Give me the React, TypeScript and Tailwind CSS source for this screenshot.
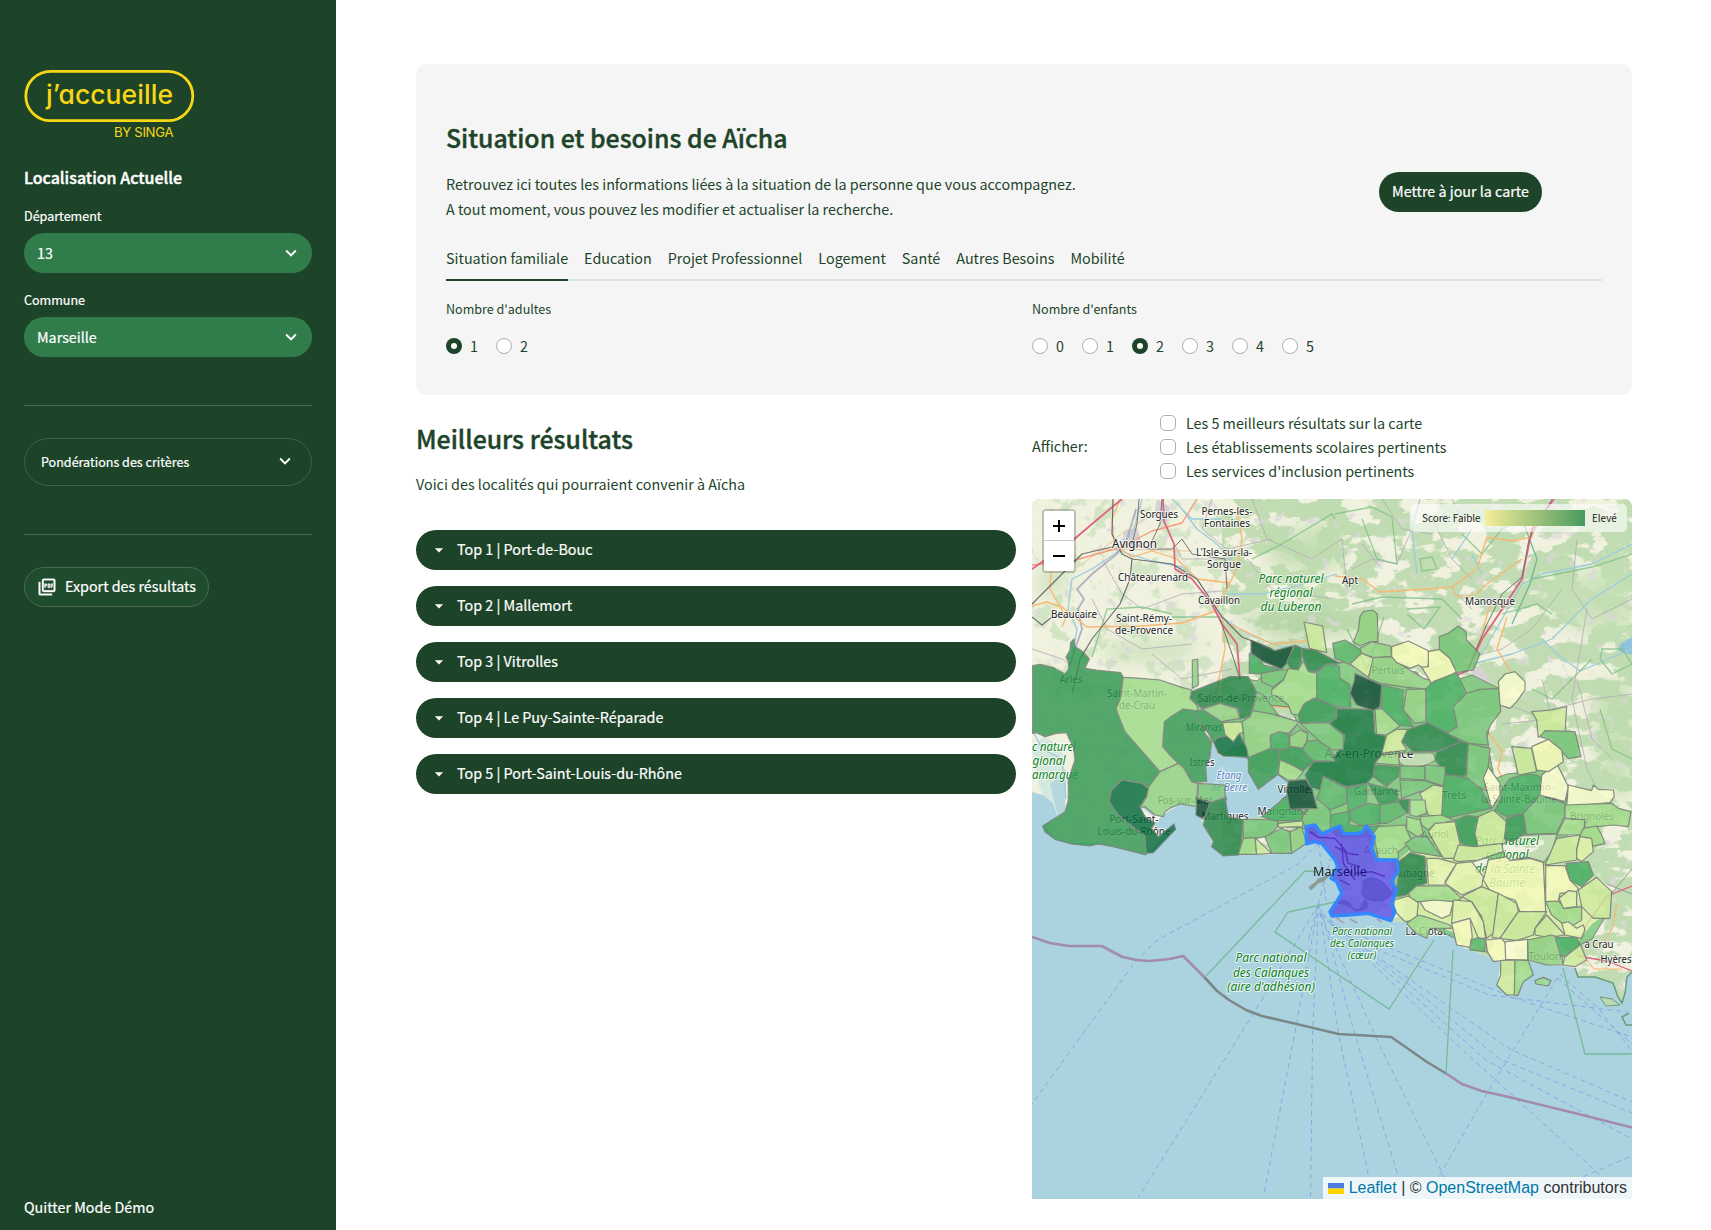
import { MdExpandMore, MdOutlinePictureAsPdf, MdArrowDropDown } from "react-icons/md";

/* ---------- Map data ---------- */

const TILE: Record<string, string> = {
  C: "translate(-2 201) scale(0.33333)",
  D: "translate(303 201) scale(0.33333)",
  E: "translate(148 91) scale(0.33333)",
  F: "translate(303 361) scale(0.33333)",
};

const SCALE: Record<string, string> = {
  b: "#fbfdcc",
  c: "#f4fab5",
  d: "#e3f4a9",
  e: "#cbec98",
  f: "#9edb86",
  g: "#8cd07e",
  h: "#70c273",
  i: "#54b566",
  j: "#3daa5b",
  k: "#2c954e",
  l: "#1f8041",
  m: "#0d723a",
  n: "#006837",
  o: "#004529",
};

// [tile, colour class, outline]
const COMMUNES: [string, string, string][] = [
  ["C", "k", "8,-103 30,-107 68,-98 105,-78 117,-93 115,-115 108,-128 120,-150 122,-173 132,-183 135,-160 155,-148 178,-123 165,-95 198,-90 272,-82 280,-68 275,-35 270,-5 268,20 258,30 265,45 285,95 390,215 355,262 335,250 275,240 245,270 237,305 265,345 320,390 345,408 348,465 310,455 250,440 205,432 180,438 125,432 75,418 45,395 38,378 80,352 105,335 115,300 115,240 135,180 130,140 118,118 110,98 80,100 45,110 20,98 8,100"],
  ["C", "f", "280,-68 330,-65 390,-60 455,-38 485,-30 480,-5 500,15 505,33 460,27 430,50 405,70 400,100 398,140 420,165 445,190 390,215 285,95 265,45 258,25 270,0"],
  ["C", "g", "487,-120 503,-123 505,-45 487,-35"],
  ["C", "k", "400,140 403,65 430,45 460,27 505,33 520,70 525,100 545,125 540,170 527,200 530,245 485,248 460,205 445,190 420,165"],
  ["C", "g", "355,262 390,215 445,190 462,205 485,246 503,250 500,320 450,312 425,322 405,335 400,350 375,345 345,320 330,322 350,290"],
  ["C", "n", "245,270 275,240 335,250 355,265 350,290 330,320 345,350 375,370 365,385 385,410 432,372 437,388 370,458 348,460 345,408 320,390 265,345 237,305"],
  ["C", "h", "505,250 585,255 585,285 590,300 545,308 503,295"],
  ["C", "o", "500,295 540,308 530,345 515,355 498,345"],
  ["C", "l", "540,308 585,293 595,350 640,360 635,420 625,465 580,468 545,440 550,425 520,375 525,350"],
  ["C", "h", "640,357 745,360 740,385 710,410 675,415 640,415"],
  ["C", "f", "640,415 675,413 680,463 625,463"],
  ["C", "e", "675,413 725,460 680,463"],
  ["C", "h", "705,410 755,385 780,395 785,460 725,460"],
  ["C", "g", "785,460 780,395 815,380 830,430"],
  ["C", "e", "745,370 820,362 818,380 745,382"],
  ["C", "k", "655,175 690,145 745,150 750,175 745,222 685,268 655,215"],
  ["C", "f", "750,178 775,185 820,215 800,240 772,240 745,222"],
  ["C", "j", "695,350 775,285 785,325 820,335 815,362 735,362"],
  ["C", "g", "640,95 635,65 660,50 668,30 720,40 805,65 800,75 775,100 745,97 720,110 722,145 650,175 645,140"],
  ["C", "l", "480,-5 485,-25 510,-35 560,-55 600,-70 655,-70 680,-25 660,50 630,57 625,25 570,13 515,25"],
  ["C", "g", "515,28 570,10 620,25 630,55 575,65 520,30"],
  ["C", "h", "680,-25 700,-15 722,15 745,45 668,32"],
  ["C", "k", "490,33 520,30 575,65 585,85 590,108 565,115 550,128 535,100 520,80 505,60"],
  ["C", "e", "578,68 635,65 640,95 625,105 615,140 585,105"],
  ["C", "n", "550,125 565,112 590,108 610,125 628,100 650,145 655,172 580,168 565,160"],
  ["C", "j", "722,105 750,95 778,105 778,148 722,148"],
  ["C", "h", "775,110 800,75 832,98 832,130 778,130"],
  ["C", "k", "750,150 835,130 850,185 820,212 775,190 748,178"],
  ["E", "j", "208,190 235,200 250,225 300,238 240,252 208,250"],
  ["E", "m", "470,355 580,358 585,430 618,440 610,490 585,520 580,560 560,580 500,590 430,560 420,600 390,590 375,555 400,515 450,515 490,465 495,435 445,400 470,385"],
  ["E", "e", "372,96 428,108 440,188 388,175"],
  ["E", "o", "213,150 285,182 340,167 325,215 305,237 250,215 213,190"],
  ["E", "l", "345,165 365,175 365,215 352,245 335,240 320,215"],
  ["E", "l", "365,175 405,180 480,220 440,222 410,245 378,245 370,215"],
  ["E", "i", "458,160 495,150 540,178 545,192 530,232 465,205"],
  ["E", "g", "540,175 575,155 632,168 635,200 580,203 545,190"],
  ["E", "e", "510,222 545,190 582,205 565,262"],
  ["E", "g", "540,80 550,65 578,60 592,72 594,155 570,155 540,168 520,155 535,120"],
  ["E", "g", "580,203 640,200 665,225 730,265 755,272 745,297 680,292 600,280 565,265 572,235"],
  ["E", "c", "635,170 685,153 745,182 748,215 740,240 715,225 690,235 650,218 635,200"],
  ["E", "c", "745,185 778,178 810,205 830,245 758,285 725,232 745,230"],
  ["E", "h", "778,140 805,130 835,108 858,125 860,150 900,192 880,240 830,248 810,205 778,178"],
  ["E", "h", "243,250 300,240 325,240 310,268 280,292 245,275"],
  ["E", "f", "275,300 310,270 325,235 355,240 370,213 385,245 410,250 413,320 370,345 355,375 335,372 325,345 290,318 275,315"],
  ["E", "j", "410,250 440,222 478,228 480,265 510,285 512,350 470,352 410,325"],
  ["E", "o", "525,250 605,285 600,350 580,362 530,345 510,310 522,275"],
  ["E", "k", "355,375 375,340 400,325 470,350 470,385 445,400 360,398"],
  ["E", "j", "605,285 670,300 668,350 700,410 655,405 605,365"],
  ["E", "g", "680,298 738,297 738,395 705,400 670,360"],
  ["E", "j", "738,297 760,275 830,248 860,310 825,345 830,410 800,428 738,395"],
  ["E", "h", "860,310 900,298 957,295 962,365 935,400 920,430 925,465 865,460 800,430 832,410 820,350"],
  ["E", "h", "445,398 490,435 490,478 455,480 420,455 360,400"],
  ["E", "g", "360,420 383,430 380,455 368,475 330,468 328,440"],
  ["E", "i", "380,455 410,450 450,475 465,515 400,512 368,480"],
  ["E", "f", "585,360 605,355 660,408 620,435 590,432"],
  ["E", "e", "620,435 650,418 683,418 665,455 680,480 605,490"],
  ["E", "l", "665,455 685,418 745,398 845,455 770,485 700,485"],
  ["E", "l", "845,455 865,460 858,560 800,555 765,510 770,485"],
  ["E", "f", "585,520 605,495 655,490 658,525"],
  ["E", "h", "660,527 735,530 735,570 660,565"],
  ["E", "h", "735,525 795,530 795,590 735,570"],
  ["E", "k", "585,525 660,530 655,560 620,590 580,560"],
  ["E", "h", "865,460 930,475 925,530 915,600 840,562 860,555"],
  ["E", "j", "795,555 860,562 905,600 930,650 935,655 780,688 790,590"],
  ["E", "h", "735,572 790,590 720,605 665,625 660,570"],
  ["E", "e", "720,610 760,585 790,590 785,680 745,675"],
  ["E", "k", "565,580 650,600 655,635 600,645"],
  ["E", "l", "655,628 688,628 685,670 660,655"],
  ["E", "i", "430,560 500,595 500,640 450,660 410,625 420,600"],
  ["E", "j", "500,595 560,580 560,640 505,665"],
  ["E", "i", "600,645 655,635 680,670 620,700 598,700"],
  ["E", "j", "505,665 565,640 600,645 600,700 545,708 510,690"],
  ["E", "h", "370,675 410,625 450,660 455,700 450,720 390,730 365,690"],
  ["E", "j", "452,675 505,665 510,705 575,710 600,705 585,740 470,740 450,715"],
  ["D", "f", "130,380 210,375 230,425 190,455 190,480 130,475 115,400"],
  ["D", "f", "215,350 255,360 265,400 250,410 215,390"],
  ["D", "h", "210,430 240,410 275,410 320,470 230,455"],
  ["D", "f", "255,350 320,345 360,362 300,372 280,390 260,375"],
  ["D", "e", "280,395 300,370 360,365 375,430 360,475 325,475 305,440"],
  ["D", "f", "225,300 270,300 275,340 245,350 225,345"],
  ["D", "l", "190,485 225,458 270,470 275,550 245,558 215,585 180,590 190,530"],
  ["D", "d", "275,475 310,475 365,490 330,545 345,555 280,555"],
  ["D", "d", "365,490 410,485 445,530 440,560 380,585 330,550"],
  ["D", "k", "360,360 395,347 430,350 425,440 400,440 375,425"],
  ["D", "e", "430,350 475,330 520,370 510,430 430,445 420,400"],
  ["D", "e", "355,480 370,435 420,440 500,430 505,455 430,480 370,485"],
  ["D", "j", "480,330 500,295 497,275 525,235 575,222 605,225 620,235 620,280 565,340 515,350"],
  ["D", "b", "445,235 460,200 495,250 495,285 470,325 455,270"],
  ["D", "k", "515,355 565,340 572,400 530,425 508,415"],
  ["D", "h", "565,340 615,285 690,310 690,345 665,400 575,403"],
  ["D", "b", "620,225 665,190 700,260 690,305 615,285"],
  ["D", "e", "530,140 590,145 605,215 550,225 540,180"],
  ["D", "e", "590,35 650,30 695,20 690,100 630,95 610,112 605,60"],
  ["D", "h", "615,110 630,92 720,95 738,170 700,175 680,155 640,118"],
  ["D", "c", "590,140 640,118 680,150 685,185 640,215 605,210"],
  ["D", "b", "700,255 770,272 775,255 790,268 835,270 838,290 825,308 695,320"],
  ["D", "f", "690,315 830,310 850,325 888,335 880,380 835,375 785,380 750,385 748,360 690,355"],
  ["D", "f", "690,355 750,360 745,405 665,405"],
  ["D", "f", "745,385 785,378 800,405 810,430 770,440 735,408"],
  ["D", "e", "665,415 735,405 725,450 725,480 630,495 650,450"],
  ["D", "d", "725,450 735,410 770,415 775,455 740,485 725,475"],
  ["D", "c", "632,497 690,497 705,540 730,565 725,575 675,580 670,605 632,605"],
  ["D", "j", "693,490 760,485 775,525 740,560 705,540"],
  ["D", "c", "460,480 515,470 525,482 585,475 625,487 632,635 555,635 540,600 470,580 445,540 450,520"],
  ["D", "e", "730,570 785,532 830,575 825,655 775,655 740,620"],
  ["D", "f", "632,605 670,603 690,625 740,620 740,660 700,685 650,645"],
  ["D", "d", "672,595 700,572 725,575 725,620 685,625"],
  ["D", "f", "220,580 245,557 340,558 380,595 360,605 230,605"],
  ["D", "b", "255,605 300,600 355,605 345,645 320,655 270,630"],
  ["D", "d", "178,600 220,588 250,608 245,660 210,665 175,630"],
  ["D", "b", "495,15 490,-55 510,-78 540,-85 570,-55 570,-30 545,5 525,25"],
  ["F", "f", "215,190 250,165 270,170 345,195 350,205 285,205 275,235 240,218"],
  ["F", "e", "380,110 440,80 490,100 475,220 455,235 440,170 410,125"],
  ["F", "d", "355,120 410,125 445,185 452,235 430,235 405,175 350,190"],
  ["F", "e", "490,100 545,130 550,155 495,235 472,232"],
  ["F", "e", "550,155 635,155 600,205 595,225 545,242 495,235"],
  ["F", "e", "600,205 635,165 690,225 640,232 600,225"],
  ["F", "c", "350,190 405,175 412,230 405,262 365,255 358,225"],
  ["F", "i", "408,240 430,233 452,240 448,275 405,270"],
  ["F", "c", "452,240 500,235 515,255 512,300 475,305 457,275"],
  ["F", "b", "510,245 578,238 578,300 512,298"],
  ["F", "g", "578,240 650,225 680,235 683,315 635,315 580,300"],
  ["F", "e", "683,315 690,290 735,250 755,300 720,320"],
  ["F", "j", "660,232 725,232 735,255 690,290 678,290"],
  ["F", "d", "680,190 700,185 725,205 745,195 750,210 740,235 690,225"],
  ["F", "e", "497,302 540,300 540,405 515,405 485,375 497,345"],
  ["F", "f", "540,300 580,302 595,345 565,365 548,408 538,405"],
  ["F", "f", "600,362 625,352 648,362 640,378 603,372"],
  ["E", "o", "325,573 378,568 395,595 412,655 330,658 320,605"],
];

const LAND =
  "0,0 600,0 600,473 595,478 593,494 590,504 586,498 581,484 563,478 546,478 543,469 531,467 515,466 496,462 500,474 491,483 486,497 475,496 465,486 469,463 456,458 438,451 425,446 420,429 395,439 383,434 373,423 359,422 336,414 300,414 308,394 303,361 290,343 275,344 260,354 231,356 191,356 181,346 171,324 164,308 148,305 131,316 123,324 126,337 142,328 114,355 66,344 40,344 23,339 13,327 26,318 21,304 11,296 0,293";

// Solid backing under the communes, with holes for the uncovered pockets
const BACKING =
  "M165 228 160 200 205 178 225 182 250 160 290 170 320 160 350 175 395 190 440 176 468 190 460 215 455 240 462 280 475 275 520 270 535 300 535 340 515 365 510 375 512 410 560 400 575 415 560 440 540 450 470 460 425 440 380 420 360 400 365 362 340 355 335 330 275 330 240 325 250 300 265 290 245 275 220 260 215 250 200 240ZM366 254 401 254 404 261 394 266 375 269 367 263ZM472 337 525 335 520 352 512 363 495 358 475 362 470 350ZM438 364 457 358 455 372 448 378ZM372 172 385 173 392 185 378 180ZM236 206 258 208 265 223 246 216Z";

const SOUTH_EAST_BACKING =
  "365,362 385,345 425,350 438,364 448,378 457,362 512,365 560,375 575,400 575,415 560,425 548,440 540,450 500,455 460,445 425,435 375,415 368,400 385,390";

// [d, stroke, width] in map units
const ROADS: [string, string, number][] = [
  ["M44 69 68 52 88 36 112 20M60 51 90 50 160 52", "#e8c7a0", 1],
  ["M0 107 15 103 30 108 55 128 110 127 150 124 183 112 205 70 210 40 205 10", "#f9b771", 1.4],
  ["M30 128 34 118 18 90 20 60 30 40", "#f9b771", 1.3],
  ["M88 0 80 20 82 45 100 58 120 52 145 60 165 80 198 84", "#f9b771", 1.3],
  ["M190 115 193 150 183 200", "#f9b771", 1.3],
  ["M198 125 240 145 275 142", "#f9b771", 1.3],
  ["M303 77 330 80 348 93 395 90 420 88 445 70 455 38 480 42 500 38 503 20", "#f9b771", 1.4],
  ["M420 88 425 98 445 95 455 85 490 60", "#f9b771", 1.2],
  ["M458 105 450 135 440 160M475 118 465 150 480 175", "#f9b771", 1.3],
  ["M455 232 470 252 466 270 475 290", "#f9b771", 1.4],
  ["M0 66 40 62 90 48 120 32 150 24 165 0", "#f29c7b", 1.4],
  ["M236 207 260 209", "#f9b771", 1.3],
  ["M0 70 40 42 60 25 90 0", "#e0607f", 1.7],
  ["M131 0 132 22 142 45 143 70 160 80 180 105 190 125 205 145 208 180", "#e0607f", 1.7],
  ["M522 0 500 30 490 80 465 118 450 140 435 172 425 176", "#e0607f", 1.8],
  ["M600 387 575 397 555 425 548 440", "#e0607f", 1.3],
  ["M545 457 575 462 600 472", "#e0607f", 1.3],
  ["M550 455 562 470 590 470M585 405 580 430 570 445", "#f9b771", 1.2],
  ["M520 0 497 40 490 78 470 95 455 125 440 160", "#777", 1],
  ["M81 0 80 35 90 55 100 60 98 80 88 105 60 140 48 160 40 195", "#6e6e6e", 1.2],
  ["M80 48 50 55 30 75 10 95 0 105", "#6e6e6e", 1.2],
  ["M0 118 10 126 20 118 60 118", "#6e6e6e", 1.1],
  ["M100 60 140 65 165 80 190 118 210 138 240 150", "#6e6e6e", 1.2],
  ["M107 0 105 25 100 45 118 50 140 50 150 40 160 55 193 60 195 90", "#777", 1],
  ["M188 120 200 155 208 180", "#6e6e6e", 1],
  ["M130 0 128 25 120 42", "#777", 1],
  ["M575 400 600 370M575 385 600 395", "#999", 1],
];

const MINOR_ROADS =
  "M70 60 90 95 110 110 150 95 190 92M60 100 75 130 110 150 160 145M130 20 150 60 200 60M180 0 170 30 195 50 240 40M220 0 235 40 280 60 310 40 315 90M215 60 240 90 300 100M320 70 340 60 365 65 380 30M400 20 420 60 440 80M440 110 425 95M545 40 540 90 560 120 600 100M530 90 500 130 470 150 430 160M430 180 460 200 500 215 560 200 600 195M545 180 560 240 580 260M330 45 350 70M510 180 520 220 470 225M0 150 30 160 60 180M120 155 150 180 200 170M555 110 540 200 555 270 570 300M350 0 370 30 400 35M460 300 480 330M420 0 430 20";

const RIVERS =
  "M110 0 102 30 90 50 60 70 40 80 36 110 45 130 40 160 33 180M82 50 120 62 150 68 165 80 190 118 215 135 250 148 275 148M150 10 165 30 185 45 200 60M140 0 160 20 190 20M195 95 230 95 260 88 305 75M388 0 380 30 385 75M600 45 560 65 510 75 490 85 470 120 450 155M600 75 560 100 520 140 480 155 440 165M510 140 525 155 548 172 600 150M440 55 450 75M0 230 10 250 30 260 34 300M420 60 440 30";

const PARK_LINES =
  "M303 15 340 8 360 18 365 65 345 60 330 20M220 60 250 45 300 15 303 20M520 115 505 105 470 115M500 80 560 68 600 55M320 105 350 98 410 100 430 120M375 110 408 108 392 130 375 115M388 60 400 58 405 70 390 72ZM570 150 590 150 600 165 580 175 568 160ZM60 158 75 110 110 108 140 115M140 118 190 118M430 35 450 55 470 30 490 20M500 190 520 200 560 160M315 130 335 170 352 118M568 210 580 250 600 260";

const FERRIES =
  "M288 344 266 366 126 441 105 461 0 605M288 405 231 501 107 698M288 405 266 524 233 696M288 405 282 535 280 698M288 405 308 534 341 690M290 410 324 534 372 690M290 415 347 541 420 690M290 415 425 544 584 688M292 415 456 561 603 640M292 415 470 560 603 614M300 425 480 550 603 603M300 425 400 465 485 499 603 538M345 450 460 496 598 513M528 479 455 598 402 690M528 479 603 545M530 475 570 510 603 552M600 658 549 680M288 344 296 405M278 440 300 360";

type Label = [string, number, number, number, string?];
// [text, centre x, baseline, width, style]
const LABELS: Label[] = [
  ["Sorgues", 127, 19, 38],
  ["Pernes-les-", 195, 16, 51],
  ["Fontaines", 195, 28, 46],
  ["Avignon", 102.5, 48.5, 45, "city"],
  ["L'Isle-sur-la-", 192, 57, 56],
  ["Sorgue", 192, 69, 34],
  ["Châteaurenard", 121, 82, 70],
  ["Cavaillon", 187, 105, 42],
  ["Beaucaire", 42, 119, 46],
  ["Saint-Rémy-", 112, 123, 56],
  ["de-Provence", 112, 135, 58],
  ["Parc naturel", 259, 84, 65, "park"],
  ["régional", 259, 98, 43, "park"],
  ["du Luberon", 259, 112, 61, "park"],
  ["Apt", 318, 85, 16],
  ["Manosque", 458, 106, 50],
  ["Arles", 39, 184, 23],
  ["Saint-Martin-", 105, 198, 60],
  ["de-Crau", 105, 210, 36],
  ["Salon-de-Provence", 209, 203, 87],
  ["Miramas", 172, 232, 36],
  ["Istres", 170, 267, 25],
  ["Vitrolles", 264, 294, 37],
  ["Marignane", 251, 316, 51],
  ["Martigues", 193, 321, 47],
  ["Fos-sur-Mer", 153, 305, 55],
  ["Port-Saint-", 102, 324, 49],
  ["Louis-du-Rhône", 102, 336, 73],
  ["c naturel", 22, 252, 44, "park"],
  ["gional", 17, 266, 33, "park"],
  ["amargue", 23, 280, 46, "park"],
  ["Pertuis", 356, 175, 33],
  ["Aix-en-Provence", 337, 259, 89, "city"],
  ["Gardanne", 345, 296, 46],
  ["Trets", 422, 300, 24],
  ["Auriol", 403, 339, 27],
  ["Allauch", 349, 355, 34],
  ["Aubagne", 382, 378, 41],
  ["La Ciotat", 394, 436, 41],
  ["Saint-Maximin-", 487, 292, 70],
  ["la-Sainte-Baume", 487, 304, 76],
  ["Brignoles", 560, 321, 44],
  ["Parc naturel", 475, 346, 64, "park"],
  ["régional", 475, 360, 43, "park"],
  ["de la Sainte-", 475, 374, 64, "park"],
  ["Baume", 475, 388, 36, "park"],
  ["Parc national", 330, 436, 60, "parkSmall"],
  ["des Calanques", 330, 448, 64, "parkSmall"],
  ["(cœur)", 330, 460, 29, "parkSmall"],
  ["Parc national", 239, 463, 71, "park"],
  ["des Calanques", 239, 478, 76, "park"],
  ["(aire d'adhésion)", 239, 492, 88, "park"],
  ["Toulon", 513, 461, 33],
  ["a Crau", 567, 449, 29],
  ["Hyères", 584, 464, 31],
  ["Étang", 197, 280, 25, "water"],
  ["de Berre", 197, 292, 37, "water"],
];

function MapLabel({ label }: { label: Label }) {
  const [text, x, y, w, kind] = label;
  const park = kind === "park" || kind === "parkSmall";
  const size = kind === "city" ? 12.5 : kind === "park" ? 12 : kind === "parkSmall" ? 10 : kind === "water" ? 10 : 11;
  return (
    <text
      x={x}
      y={y}
      textAnchor="middle"
      textLength={w}
      lengthAdjust="spacingAndGlyphs"
      fontSize={size}
      fontStyle={park || kind === "water" ? "italic" : "normal"}
      fill={park ? "#0a8020" : kind === "water" ? "#5a83c4" : "#222"}
      stroke="#fff"
      strokeOpacity={0.75}
      strokeWidth={2}
      paintOrder="stroke"
      strokeLinejoin="round"
    >
      {text}
    </text>
  );
}

function ScoreMap() {
  return (
    <svg viewBox="0 0 600 700" className="block h-[700px] w-[600px] font-['Noto_Sans',sans-serif]">
      <defs>
        <clipPath id="land">
          <polygon points={LAND} />
        </clipPath>
        <filter id="woods" x="0" y="0" width="100%" height="100%" colorInterpolationFilters="sRGB">
          <feTurbulence type="fractalNoise" baseFrequency="0.035 0.055" numOctaves="6" seed="5" result="n" />
          <feColorMatrix in="n" type="matrix" values="0 0 0 0 0.755  0 0 0 0 0.863  0 0 0 0 0.7  16 0 0 0 -6.7" />
        </filter>
        <filter id="groves" x="0" y="0" width="100%" height="100%" colorInterpolationFilters="sRGB">
          <feTurbulence type="fractalNoise" baseFrequency="0.05" numOctaves="5" seed="14" result="n" />
          <feColorMatrix in="n" type="matrix" values="0 0 0 0 0.8  0 0 0 0 0.89  0 0 0 0 0.75  14 0 0 0 -7.8" />
        </filter>
        <filter id="towns" x="0" y="0" width="100%" height="100%" colorInterpolationFilters="sRGB">
          <feTurbulence type="fractalNoise" baseFrequency="0.07" numOctaves="3" seed="21" result="n" />
          <feColorMatrix in="n" type="matrix" values="0 0 0 0 0.86  0 0 0 0 0.85  0 0 0 0 0.85  12 0 0 0 -8" />
        </filter>
        <filter id="soft" x="-20%" y="-20%" width="140%" height="140%">
          <feGaussianBlur stdDeviation="9" />
        </filter>
      </defs>
      <rect width="600" height="700" fill="#aad3df" />
      <g clipPath="url(#land)">
        <rect width="600" height="520" fill="#f0f1de" />
        <rect x="190" width="410" height="520" filter="url(#woods)" />
        <rect width="190" height="200" filter="url(#groves)" opacity="0.8" />
        <g filter="url(#soft)" opacity="0.8">
          <path d="M200 115 290 108 345 130 250 142Z" fill="#b4d4a4" />
          <path d="M70 145 170 140 150 160 80 162Z" fill="#c3dfb4" />
          <path d="M10 70 35 65 30 92 5 97Z" fill="#c3dfb4" />
          <path d="M235 40 300 20 310 70 240 70Z" fill="#bddcae" />
          <path d="M500 90 600 60 600 140 540 130Z" fill="#c3dfb4" />
          <path d="M560 190 600 180 600 300 570 290Z" fill="#bddcae" />
        </g>
        <rect width="600" height="520" filter="url(#towns)" opacity="0.7" />
        <path d="M92 32 105 28 110 48 90 50ZM125 0 138 8 134 26 122 18ZM215 186 232 184 230 192ZM452 97 462 100 456 112ZM438 170 450 168 462 190 445 185Z" fill="#d6d2d4" />
        <path d="M0 250 12 236 30 250 34 285 26 318 8 290Z" fill="#d3e9dd" />
        <path d="M18 285 34 270 33 312 26 318Z" fill="#b5d8de" />
        <path d="M600 138 588 145 586 152 600 156Z" fill="#8fc4da" />
        <path d={MINOR_ROADS} fill="none" stroke="#b3abb5" strokeWidth="0.8" strokeLinejoin="round" />
        <path d={RIVERS} fill="none" stroke="#9cccdb" strokeWidth="1.3" strokeLinejoin="round" />
        <path d="M104 10 95 40 85 55 60 75 45 90 52 100 46 110 50 130 38 165" fill="none" stroke="#a49fc0" strokeWidth="1.8" opacity="0.8" />
        <path d={PARK_LINES} fill="none" stroke="#7fbf86" strokeWidth="1.3" opacity="0.8" />
        <path d="M490 20 505 60 498 85 480 125" fill="none" stroke="#6fb795" strokeWidth="1.3" />
        {ROADS.map(([d, s, w], i) => (
          <path key={i} d={d} fill="none" stroke={s} strokeWidth={w} strokeLinejoin="round" />
        ))}
      </g>
      <path d="M543 469 546 478 563 478 581 484 586 498 590 504 593 494 595 478 600 473M597 514 590 518 594 526 600 526" fill="none" stroke="#6c9a7c" strokeWidth="1.5" />
      <path d="M568 498 580 500 588 506 574 507Z" fill="#bcd9b0" stroke="#6c9a7c" />
      <path d="M286 380 298 376 292 382 286 384 279 391 277 388 284 383Z" fill="#8f9a90" stroke="#8f9a90" />

      <g fill="none" transform="scale(0.995 1)">
        <path d={FERRIES} stroke="#7f97e6" strokeWidth="0.9" strokeDasharray="5 4" opacity="0.85" />
        <path d="M0 438 18 444 37 447 70 447 91 458 105 461 118 462 138 460 152 457 173 478" stroke="#a38bab" strokeWidth="2.6" strokeLinejoin="round" />
        <path d="M173 478 186 492 198 501 215 511 231 517 266 525 308 535 361 538 397 563 417 575" stroke="#7c8888" strokeWidth="2.6" strokeLinejoin="round" />
        <path d="M417 575 432 585 452 592 475 597 541 613 605 629" stroke="#a38bab" strokeWidth="2.6" strokeLinejoin="round" />
      </g>
      <path
        d="M290 373 273 372 174 477M303 403 256 413 243 433 357 510 402 441M421 451 414 574M531 469 553 555 600 555"
        fill="none"
        stroke="#76bb9c"
        strokeWidth="1.3"
      />

      <polygon
        transform={TILE.C}
        points="548,125 565,165 580,170 655,172 650,200 685,268 745,222 770,235 775,290 695,350 645,355 595,350 583,290 585,258 530,250 527,200 540,170"
        fill="#aad3df"
      />
      <path transform={TILE.C} d="M340 320 375 348" stroke="#aad3df" strokeWidth="9" />

      {LABELS.map((l, i) => (
        <MapLabel key={i} label={l} />
      ))}

      <g opacity="0.8">
        <path d={BACKING} fillRule="evenodd" fill="#78c679" stroke="#6a6f6a" strokeWidth="1" />
        <polygon points={SOUTH_EAST_BACKING} fill="#d9f0a3" />
        {COMMUNES.map(([tile, colour, points], i) => (
          <polygon
            key={i}
            points={points}
            transform={TILE[tile]}
            fill={SCALE[colour]}
            stroke="#6f746f"
            strokeWidth={3.6}
            strokeLinejoin="round"
          />
        ))}
      </g>

      <g transform={TILE.D}>
        <polygon
          points="-3,385 15,378 25,400 50,402 80,398 95,378 118,410 110,445 125,480 185,480 190,510 170,545 185,570 170,610 180,635 168,662 130,650 100,640 40,645 -10,648 -15,635 5,605 20,580 5,545 -12,535 8,500 0,480 -40,430 -60,425 -85,432 -87,380 -60,375 -40,403"
          fill="#5f55e6"
          fillOpacity="0.86"
          stroke="#3388ff"
          strokeWidth="10"
          strokeLinejoin="round"
        />
        <path d="M-75 395-50 412 0 415 30 450 40 490 75 500M20 430 25 490 60 540M0 440 40 460 70 465M60 520 110 515 150 530M15 540 45 555" fill="none" stroke="#4a1cb4" strokeWidth="4" opacity="0.75" />
        <path d="M85 545Q120 520 155 560L170 580Q150 610 110 600T85 565ZM10 610Q30 590 50 620T90 600Q110 630 70 630" fill="#5046c4" stroke="#4a3fc0" strokeWidth="5" opacity="0.5" />
      </g>
      <text x="281" y="376.5" textLength="54" lengthAdjust="spacingAndGlyphs" fontSize="13" fill="#222">
        Mar<tspan fill="#1d1478">seille</tspan>
      </text>
      <path d="M303 418 312 424M318 420 325 424M345 420 350 423" stroke="#a59bb5" strokeWidth="1.5" />
    </svg>
  );
}

/* ---------- Controls ---------- */

function Select({ label, value }: { label: string; value: string }) {
  return (
    <div>
      <div className="h-[25px] text-[12.55px] leading-[16px] [-webkit-text-stroke:0.2px]">{label}</div>
      <div className="flex h-10 items-center justify-between rounded-full bg-[#317c4b] pr-[10px] pb-px pl-[13px] text-[14.3px] [-webkit-text-stroke:0.2px]">
        <span>{value}</span>
        <MdExpandMore className="size-[22px]" />
      </div>
    </div>
  );
}

function RadioGroup({ label, options, selected }: { label: string; options: string[]; selected: string }) {
  return (
    <div className="w-[586px] shrink-0">
      <div className="text-[12.55px] leading-5">{label}</div>
      <div className="mt-[17px] flex h-5 items-center">
        {options.map((o) => (
          <div key={o} className="flex w-[50px] items-center gap-2">
            {o === selected ? (
              <span className="flex size-4 items-center justify-center rounded-full bg-[#1d4429]">
                <span className="size-1.5 rounded-full bg-white" />
              </span>
            ) : (
              <span className="size-4 rounded-full border border-[#a5b4a9] bg-white" />
            )}
            <span className="text-[14.33px] leading-5">{o}</span>
          </div>
        ))}
      </div>
    </div>
  );
}

const TABS = ["Situation familiale", "Education", "Projet Professionnel", "Logement", "Santé", "Autres Besoins", "Mobilité"];
const RESULTS = ["Port-de-Bouc", "Mallemort", "Vitrolles", "Le Puy-Sainte-Réparade", "Port-Saint-Louis-du-Rhône"];
const LAYERS = ["Les 5 meilleurs résultats sur la carte", "Les établissements scolaires pertinents", "Les services d'inclusion pertinents"];

export default function App() {
  return (
    <div className="flex h-[1230px] w-[1711px] overflow-hidden bg-white font-['Noto_Sans_CJK_SC',sans-serif] text-[14.33px] text-[#1d4429]">
      <aside className="flex h-full w-[336px] shrink-0 flex-col bg-[#1d4429] px-6 pt-[69px] text-white">
        <svg viewBox="0 0 172 72" className="h-[72px] w-[172px]" fill="#f7d715">
          <rect x="1.8" y="2.3" width="167" height="49.4" rx="24.7" fill="none" stroke="#f7d715" strokeWidth="2.8" />
          <text
            x="22"
            y="34.5"
            textLength="127"
            fontSize="26.5"
            fontWeight="500"
            className="font-['Inter',sans-serif] [font-feature-settings:'cv11']"
          >
            j’accueille
          </text>
          <text x="90" y="68" textLength="59.5" fontSize="13.2" fontWeight="400" className="font-['Inter',sans-serif]">
            BY SINGA
          </text>
        </svg>
        <h2 className="mt-6 text-[16px] leading-6 font-medium [-webkit-text-stroke:0.4px]">Localisation Actuelle</h2>
        <div className="mt-[19px] flex flex-col gap-[19px]">
          <Select label="Département" value="13" />
          <Select label="Commune" value="Marseille" />
        </div>
        <hr className="mt-[48px] border-t border-[#4c6b56]" />
        <div className="mt-[32px] flex h-12 items-center justify-between rounded-full border border-[#3f6049] pr-[15px] pl-4 text-[12.55px] [-webkit-text-stroke:0.2px]">
          <span>Pondérations des critères</span>
          <MdExpandMore className="mb-0.5 size-[22px]" />
        </div>
        <hr className="mt-[48px] border-t border-[#4c6b56]" />
        <button className="mt-[32px] flex h-10 w-[185px] items-center gap-2 rounded-full border border-[#4a6b53] bg-[#204c2e] pb-0.5 pl-3 text-[14.3px] whitespace-nowrap [-webkit-text-stroke:0.2px]">
          <MdOutlinePictureAsPdf className="mt-px size-5 shrink-0 [&>path:last-child]:stroke-white [&>path:last-child]:stroke-[0.4px]" />
          Export des résultats
        </button>
        <div className="mt-auto pb-[11px] text-[14.3px] leading-6 [-webkit-text-stroke:0.2px]">Quitter Mode Démo</div>
      </aside>

      <main className="flex flex-1 flex-col pt-16 pl-20">
        <section className="h-[331px] w-[1216px] rounded-[10px] bg-[#f5f5f5] px-[30px] pt-[57px]">
          <div className="flex justify-between">
            <div>
              <h1 className="text-[24.85px] leading-8 font-medium [-webkit-text-stroke:0.4px]">Situation et besoins de Aïcha</h1>
              <p className="mt-[18px] leading-[25px]">
                Retrouvez ici toutes les informations liées à la situation de la personne que vous accompagnez.
                <br />A tout moment, vous pouvez les modifier et actualiser la recherche.
              </p>
            </div>
            <button className="mt-[51px] mr-[60px] h-10 w-[163px] rounded-full bg-[#1d4429] pb-0.5 text-[14.3px] whitespace-nowrap text-white [-webkit-text-stroke:0.2px]">
              Mettre à jour la carte
            </button>
          </div>
          <div className="mt-5 flex h-10 gap-4 border-b-2 border-[#dde2df]">
            {TABS.map((t, i) => (
              <div
                key={t}
                className={
                  i === 0
                    ? "-mb-0.5 h-10 border-b-2 border-[#1d4429] pt-[7px] leading-5"
                    : "pt-[7px] leading-5"
                }
              >
                {t}
              </div>
            ))}
          </div>
          <div className="mt-[18px] flex">
            <RadioGroup label="Nombre d'adultes" options={["1", "2"]} selected="1" />
            <RadioGroup label="Nombre d'enfants" options={["0", "1", "2", "3", "4", "5"]} selected="2" />
          </div>
        </section>

        <div className="flex gap-4">
          <section className="w-[600px] pt-[27px]">
            <h2 className="text-[24.85px] leading-8 font-medium [-webkit-text-stroke:0.4px]">Meilleurs résultats</h2>
            <p className="mt-[17px] leading-[25px]">Voici des localités qui pourraient convenir à Aïcha</p>
            <div className="mt-[34px] flex flex-col gap-4">
              {RESULTS.map((r, i) => (
                <div key={r} className="flex h-10 items-center rounded-full bg-[#1d4429] pb-0.5 pl-[13px] text-[14.33px] text-white [-webkit-text-stroke:0.2px]">
                  <MdArrowDropDown className="mt-px mr-[8px] size-5" />
                  Top {i + 1} | {r}
                </div>
              ))}
            </div>
          </section>

          <section className="w-[600px] pt-4">
            <div className="flex h-[88px]">
              <div className="w-32 pt-[23px] leading-6">Afficher:</div>
              <div className="pt-px">
                {LAYERS.map((l) => (
                  <div key={l} className="flex h-6 items-center gap-[10px]">
                    <span className="mb-0.5 size-4 rounded-[5px] border border-[#a5b4a9] bg-white" />
                    <span className="mb-0.5 leading-[22px]">{l}</span>
                  </div>
                ))}
              </div>
            </div>
            <div className="relative h-[700px] overflow-hidden rounded-t-lg">
              <ScoreMap />
              <div className="absolute top-[10px] left-[10px] w-[34px] rounded-[4px] border-2 border-black/20 bg-clip-padding">
                <div className="flex h-[30px] items-center justify-center rounded-t-[2px] border-b border-[#ccc] bg-white">
                  <svg viewBox="0 0 12 12" className="size-3" stroke="#000" strokeWidth="2">
                    <path d="M6 0v12M0 6h12" />
                  </svg>
                </div>
                <div className="flex h-[30px] items-center justify-center rounded-b-[2px] bg-white">
                  <svg viewBox="0 0 12 12" className="size-3" stroke="#000" strokeWidth="2">
                    <path d="M0 6h12" />
                  </svg>
                </div>
              </div>
              <div className="absolute top-[5px] right-[5px] flex h-[28px] w-[217px] items-center rounded-[5px] bg-white/60 pl-3 text-[9.9px] text-[#222]">
                <span className="w-[63px] whitespace-nowrap">Score: Faible</span>
                <span className="h-4 w-[100px] bg-linear-to-r from-[#f5ee98] to-[#45995f]" />
                <span className="ml-[7px]">Elevé</span>
              </div>
              <div className="absolute right-0 bottom-0 flex h-[22px] items-center bg-white/80 px-[5px] font-['Liberation_Sans',sans-serif] text-[16px] leading-[22px] whitespace-pre text-[#333]">
                <svg viewBox="0 0 12 8" className="mr-[5px] h-[11px] w-4" preserveAspectRatio="none">
                  <path fill="#4C7BE1" d="M0 0h12v4H0z" />
                  <path fill="#FFD500" d="M0 4h12v4H0z" />
                </svg>
                <span className="text-[#0078a8]">Leaflet</span>
                <span> | © </span>
                <span className="text-[#0078a8]">OpenStreetMap</span>
                <span> contributors</span>
              </div>
            </div>
          </section>
        </div>
      </main>
    </div>
  );
}
